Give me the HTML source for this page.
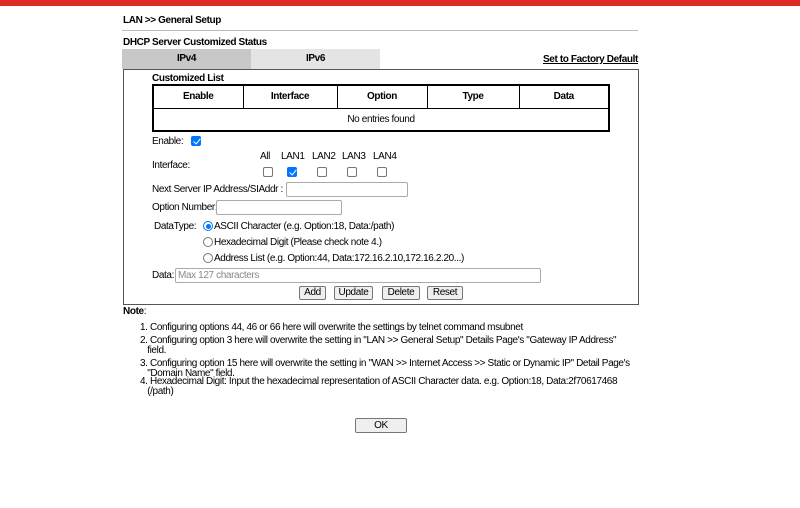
<!DOCTYPE html><html><head><style>
*{margin:0;padding:0;box-sizing:border-box}
body{width:800px;height:508px;background:#fff;font-family:"Liberation Sans",Arial,sans-serif;font-size:10px;letter-spacing:-0.38px;color:#000;position:relative;overflow:hidden}
.a{position:absolute;white-space:nowrap}
.b{font-weight:bold}
.cb{position:absolute;width:10px;height:10px;border:1px solid #767676;border-radius:2px;background:#fff}
.cb.on{background:#0075ff;border-color:#0075ff}
.cb.on::after{content:"";position:absolute;left:2.5px;top:0px;width:3px;height:6px;border:solid #fff;border-width:0 1.6px 1.6px 0;transform:rotate(40deg)}
.rd{position:absolute;width:10px;height:10px;border:1px solid #767676;border-radius:50%;background:#fff}
.rd.on{border-color:#0075ff}
.rd.on::after{content:"";position:absolute;left:1.5px;top:1.5px;width:5px;height:5px;border-radius:50%;background:#0075ff}
.in{position:absolute;border:1px solid #aaa;border-radius:2px;background:#fff}
.btn{position:absolute;border:1px solid #777;background:#efefef;border-radius:2px;text-align:center;font-size:10px;line-height:12px}
td{border:1px solid #000;text-align:center}
.n{position:absolute;left:140px;white-space:nowrap;line-height:9.6px}
</style></head><body>
<div class="a" style="left:0;top:0;width:800px;height:6px;background:#dd2a22"></div>
<div class="a b" style="left:123px;top:15px">LAN &gt;&gt; General Setup</div>
<div class="a" style="left:122px;top:30px;width:516px;height:1px;background:#bbb"></div>
<div class="a b" style="left:123px;top:37px">DHCP Server Customized Status</div>
<div class="a b" style="left:122px;top:49px;width:129px;height:20px;background:#c8c8c8;text-align:center;line-height:20px">IPv4</div>
<div class="a b" style="left:251px;top:49px;width:129px;height:20px;background:#e4e4e4;text-align:center;line-height:20px">IPv6</div>
<div class="a b" style="left:543px;top:54px;text-decoration:underline">Set to Factory Default</div>
<div class="a" style="left:123px;top:69px;width:516px;height:236px;border:1.5px solid #555"></div>
<div class="a b" style="left:152px;top:73px">Customized List</div>
<table class="a" style="left:152px;top:84px;width:458px;border-collapse:collapse;border:2px solid #000">
<tr style="height:23px" class="b"><td style="width:90px">Enable</td><td style="width:94px">Interface</td><td style="width:90px">Option</td><td style="width:92px">Type</td><td>Data</td></tr>
<tr style="height:23px"><td colspan="5">No entries found</td></tr></table>
<div class="a" style="left:152px;top:136px">Enable:</div>
<div class="cb on" style="left:191px;top:136px"></div>
<div class="a" style="left:152px;top:160px">Interface:</div>
<div class="a" style="left:260px;top:151px">All</div>
<div class="a" style="left:281px;top:151px">LAN1</div>
<div class="a" style="left:312px;top:151px">LAN2</div>
<div class="a" style="left:342px;top:151px">LAN3</div>
<div class="a" style="left:373px;top:151px">LAN4</div>
<div class="cb" style="left:263px;top:167px"></div>
<div class="cb on" style="left:287px;top:167px"></div>
<div class="cb" style="left:317px;top:167px"></div>
<div class="cb" style="left:347px;top:167px"></div>
<div class="cb" style="left:377px;top:167px"></div>
<div class="a" style="left:152px;top:184px">Next Server IP Address/SIAddr :</div>
<div class="in" style="left:286px;top:182px;width:122px;height:15px"></div>
<div class="a" style="left:152px;top:202px">Option Number:</div>
<div class="in" style="left:216px;top:200px;width:126px;height:15px"></div>
<div class="a" style="left:154px;top:221px">DataType:</div>
<div class="rd on" style="left:203px;top:221px"></div>
<div class="a" style="left:214px;top:221px">ASCII Character (e.g. Option:18, Data:/path)</div>
<div class="rd" style="left:203px;top:237px"></div>
<div class="a" style="left:214px;top:237px">Hexadecimal Digit (Please check note 4.)</div>
<div class="rd" style="left:203px;top:253px"></div>
<div class="a" style="left:214px;top:253px">Address List (e.g. Option:44, Data:172.16.2.10,172.16.2.20...)</div>
<div class="a" style="left:152px;top:270px">Data:</div>
<div class="in" style="left:175px;top:268px;width:366px;height:15px;color:#888;padding-left:2px;line-height:13px">Max 127 characters</div>
<div class="btn" style="left:299px;top:286px;width:27px;height:14px">Add</div>
<div class="btn" style="left:334px;top:286px;width:39px;height:14px">Update</div>
<div class="btn" style="left:382px;top:286px;width:38px;height:14px">Delete</div>
<div class="btn" style="left:427px;top:286px;width:36px;height:14px">Reset</div>
<div class="a" style="left:123px;top:306px"><b>Note</b>:</div>
<div class="n" style="top:323px">1. Configuring options 44, 46 or 66 here will overwrite the settings by telnet command msubnet</div>
<div class="n" style="top:336px">2. Configuring option 3 here will overwrite the setting in "LAN &gt;&gt; General Setup" Details Page's "Gateway IP Address"<br>&nbsp;&nbsp;&nbsp;field.</div>
<div class="n" style="top:359px">3. Configuring option 15 here will overwrite the setting in "WAN &gt;&gt; Internet Access &gt;&gt; Static or Dynamic IP" Detail Page's<br>&nbsp;&nbsp;&nbsp;"Domain Name" field.</div>
<div class="n" style="top:377px">4. Hexadecimal Digit: Input the hexadecimal representation of ASCII Character data. e.g. Option:18, Data:2f70617468<br>&nbsp;&nbsp;&nbsp;(/path)</div>
<div class="btn" style="left:355px;top:418px;width:52px;height:15px;line-height:13px">OK</div>
</body></html>
